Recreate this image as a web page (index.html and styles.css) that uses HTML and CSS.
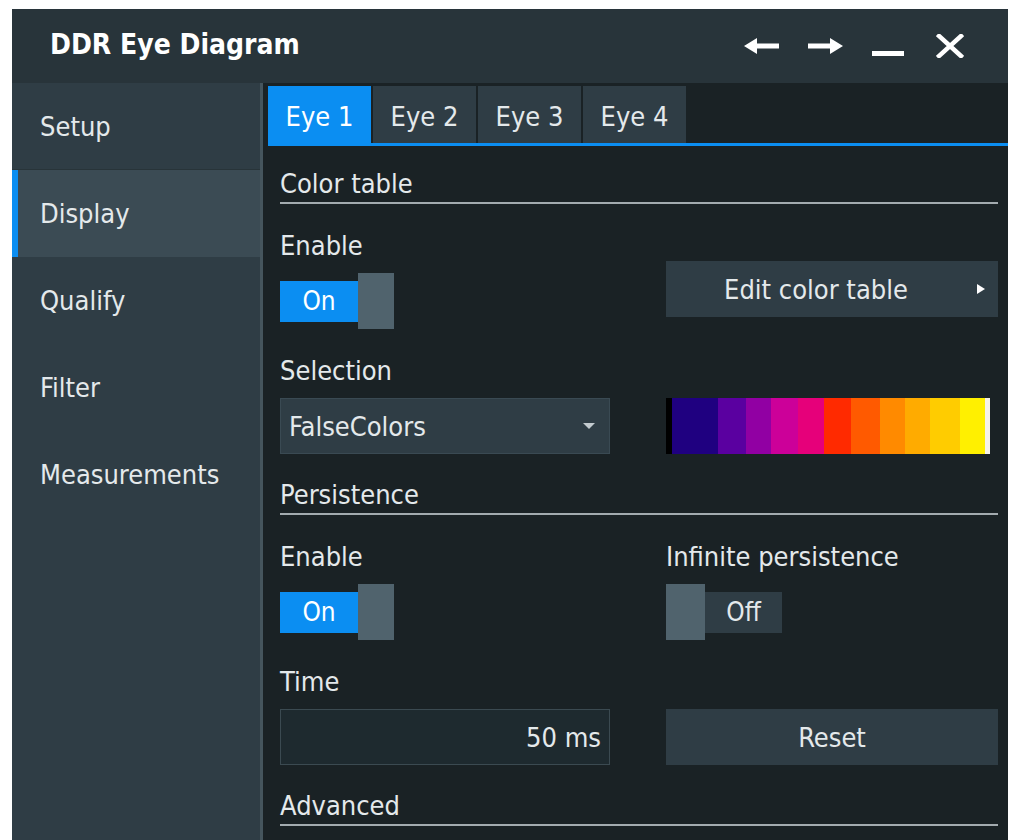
FILE: index.html
```html
<!DOCTYPE html>
<html lang="en">
<head>
    <meta charset="UTF-8">
    <meta name="viewport" content="width=device-width, initial-scale=1.0">
    <title>DDR Eye Diagram</title>

    <link rel="stylesheet" href="styles.css">
</head>
<body>
    <div class="window">
        <header class="titlebar">
            <h1 class="title">DDR Eye Diagram</h1>
            <div class="title_actions">
                <span class="icon icon_back">
                    <svg width="36" height="16" viewBox="0 0 36 16"><path d="M0 8 L13 0 L13 5.5 L35 5.5 L35 10.5 L13 10.5 L13 16 Z" fill="#fff"/></svg>
                </span>
                <span class="icon icon_forward">
                    <svg width="36" height="16" viewBox="0 0 36 16"><path d="M36 8 L23 0 L23 5.5 L1 5.5 L1 10.5 L23 10.5 L23 16 Z" fill="#fff"/></svg>
                </span>
                <span class="icon icon_min">
                    <svg width="32" height="24" viewBox="0 0 32 24"><rect x="0" y="17" width="32" height="5" fill="#fff"/></svg>
                </span>
                <span class="icon icon_close">
                    <svg width="28" height="24" viewBox="0 0 28 24"><path d="M3 2 L25 22 M25 2 L3 22" stroke="#fff" stroke-width="4.5" stroke-linecap="square"/></svg>
                </span>
            </div>
        </header>

        <div class="content">
            <nav class="sidebar">
                <div class="nav_item">Setup</div>
                <div class="nav_item active">Display</div>
                <div class="nav_item">Qualify</div>
                <div class="nav_item">Filter</div>
                <div class="nav_item">Measurements</div>
            </nav>

            <main class="panel">
                <div class="tabs">
                    <div class="tab active">Eye 1</div>
                    <div class="tab">Eye 2</div>
                    <div class="tab">Eye 3</div>
                    <div class="tab">Eye 4</div>
                </div>

                <div class="form">
                    <div class="section_title">Color table</div>

                    <div class="field">
                        <div class="label">Enable</div>
                        <div class="toggle">
                            <span class="toggle_state on">On</span>
                            <span class="knob"></span>
                        </div>
                    </div>
                    <div class="field no_label raised">
                        <div class="btn btn_menu">
                            <span class="btn_text">Edit color table</span>
                            <svg width="10" height="12" viewBox="0 0 10 12"><path d="M1 1 L9 6 L1 11 Z" fill="#fff"/></svg>
                        </div>
                    </div>

                    <div class="field">
                        <div class="label">Selection</div>
                        <div class="select">
                            <span>FalseColors</span>
                            <svg width="12" height="8" viewBox="0 0 12 8"><path d="M0 1 L12 1 L6 7 Z" fill="#c3cbcf"/></svg>
                        </div>
                    </div>
                    <div class="field no_label">
                        <div class="color_bar">
                            <span style="flex: 6; background: #000;"></span>
                            <span style="flex: 46; background: #1f0080;"></span>
                            <span style="flex: 28; background: #5a00a0;"></span>
                            <span style="flex: 25; background: #9100a3;"></span>
                            <span style="flex: 27; background: #cc0099;"></span>
                            <span style="flex: 26; background: #e6007a;"></span>
                            <span style="flex: 26; background: #ff2a00;"></span>
                            <span style="flex: 29; background: #ff5a00;"></span>
                            <span style="flex: 25; background: #ff8a00;"></span>
                            <span style="flex: 25; background: #ffab00;"></span>
                            <span style="flex: 30; background: #ffcc00;"></span>
                            <span style="flex: 25; background: #fff000;"></span>
                            <span style="flex: 5; background: #f6f3ea;"></span>
                        </div>
                    </div>

                    <div class="section_title">Persistence</div>

                    <div class="field">
                        <div class="label">Enable</div>
                        <div class="toggle">
                            <span class="toggle_state on">On</span>
                            <span class="knob"></span>
                        </div>
                    </div>
                    <div class="field">
                        <div class="label">Infinite persistence</div>
                        <div class="toggle">
                            <span class="knob knob_off"></span>
                            <span class="toggle_state off">Off</span>
                        </div>
                    </div>

                    <div class="field">
                        <div class="label">Time</div>
                        <div class="input">50 ms</div>
                    </div>
                    <div class="field no_label">
                        <div class="btn">Reset</div>
                    </div>

                    <div class="section_title">Advanced</div>
                </div>
            </main>
        </div>
    </div>
</body>
</html>
```

FILE: styles.css
```css
body
{
    margin: 0px;
    background-color: #ffffff;
    font-family: "DejaVu Sans Condensed", "DejaVu Sans", sans-serif;
    font-stretch: condensed;
    color: #e4e9eb;
}

.window
{
    display: flex;
    flex-direction: column;
    width: 996px;
    height: 831px;
    margin: 9px 0px 0px 12px;
    background-color: #1a2225;
    overflow: hidden;
}

/* title bar */

.titlebar
{
    display: flex;
    align-items: center;
    justify-content: space-between;
    height: 74px;
    flex-shrink: 0;
    padding: 0px 44px 0px 38px;
    background-color: #28343a;
}

.title
{
    margin: 0px;
    font-size: 28px;
    font-weight: bold;
    color: #ffffff;
    padding-bottom: 4px;
}

.title_actions
{
    display: flex;
    align-items: center;
    gap: 27px;
}

.icon
{
    display: flex;
}

.icon_min
{
    margin-left: 2px;
    margin-right: 5px;
}

/* side navigation */

.content
{
    display: flex;
    flex: 1;
    min-height: 0px;
}

.sidebar
{
    width: 248px;
    flex-shrink: 0;
    background-color: #2f3d45;
    border-right: 3px solid #45555d;
}

.nav_item
{
    height: 87px;
    display: flex;
    align-items: center;
    padding-left: 28px;
    font-size: 27px;
}

.nav_item:first-child
{
    height: 86px;
    border-bottom: 1px solid #283439;
}

.nav_item.active
{
    background-color: #3b4b54;
    box-shadow: inset 6px 0px 0px #0b8ef2;
}

/* right panel */

.panel
{
    flex: 1;
    padding-left: 5px;
    background-color: #1a2225;
}

.tabs
{
    display: flex;
    gap: 2px;
    height: 57px;
    margin-top: 3px;
    border-bottom: 3px solid #0b8ef2;
}

.tab
{
    width: 103px;
    display: flex;
    align-items: center;
    justify-content: center;
    padding-top: 4px;
    box-sizing: border-box;
    font-size: 27px;
    background-color: #2f3d45;
}

.tab.active
{
    background-color: #0b8ef2;
    color: #ffffff;
}

.form
{
    display: grid;
    grid-template-columns: 330px 332px;
    column-gap: 56px;
    row-gap: 26px;
    padding: 20px 10px 0px 12px;
}

.section_title
{
    grid-column: 1 / -1;
    height: 36px;
    line-height: 36px;
    font-size: 27px;
    border-bottom: 2px solid #a3abaf;
}

.section_title:not(:first-child)
{
    margin-top: -3px;
}

.field
{
    display: flex;
    flex-direction: column;
    gap: 11px;
}

.field.no_label
{
    padding-top: 43px;
}

.field.no_label.raised
{
    padding-top: 31px;
}

.label
{
    height: 32px;
    line-height: 32px;
    font-size: 27px;
}

/* controls */

.toggle
{
    display: flex;
    align-items: center;
    height: 56px;
}

.toggle_state
{
    width: 78px;
    height: 41px;
    display: flex;
    align-items: center;
    justify-content: center;
    font-size: 26px;
}

.toggle_state.on
{
    background-color: #0b8ef2;
    color: #ffffff;
}

.toggle_state.off
{
    width: 77px;
    background-color: #2f3d45;
}

.knob
{
    width: 36px;
    height: 56px;
    background-color: #50636d;
}

.knob_off
{
    width: 39px;
}

.btn
{
    height: 56px;
    display: flex;
    align-items: center;
    justify-content: center;
    font-size: 27px;
    background-color: #2f3d45;
}

.btn_menu
{
    padding-right: 12px;
}

.btn_text
{
    flex: 1;
    text-align: center;
    padding-right: 10px;
}

.select
{
    height: 54px;
    display: flex;
    align-items: center;
    justify-content: space-between;
    padding: 0px 14px 0px 8px;
    font-size: 27px;
    background-color: #2f3d45;
    border: 1px solid #3a4a53;
}

.color_bar
{
    display: flex;
    width: 324px;
    height: 56px;
}

.input
{
    height: 54px;
    display: flex;
    align-items: center;
    justify-content: flex-end;
    padding-right: 8px;
    font-size: 27px;
    background-color: #1e2a2f;
    border: 1px solid #3b4a51;
}
```
